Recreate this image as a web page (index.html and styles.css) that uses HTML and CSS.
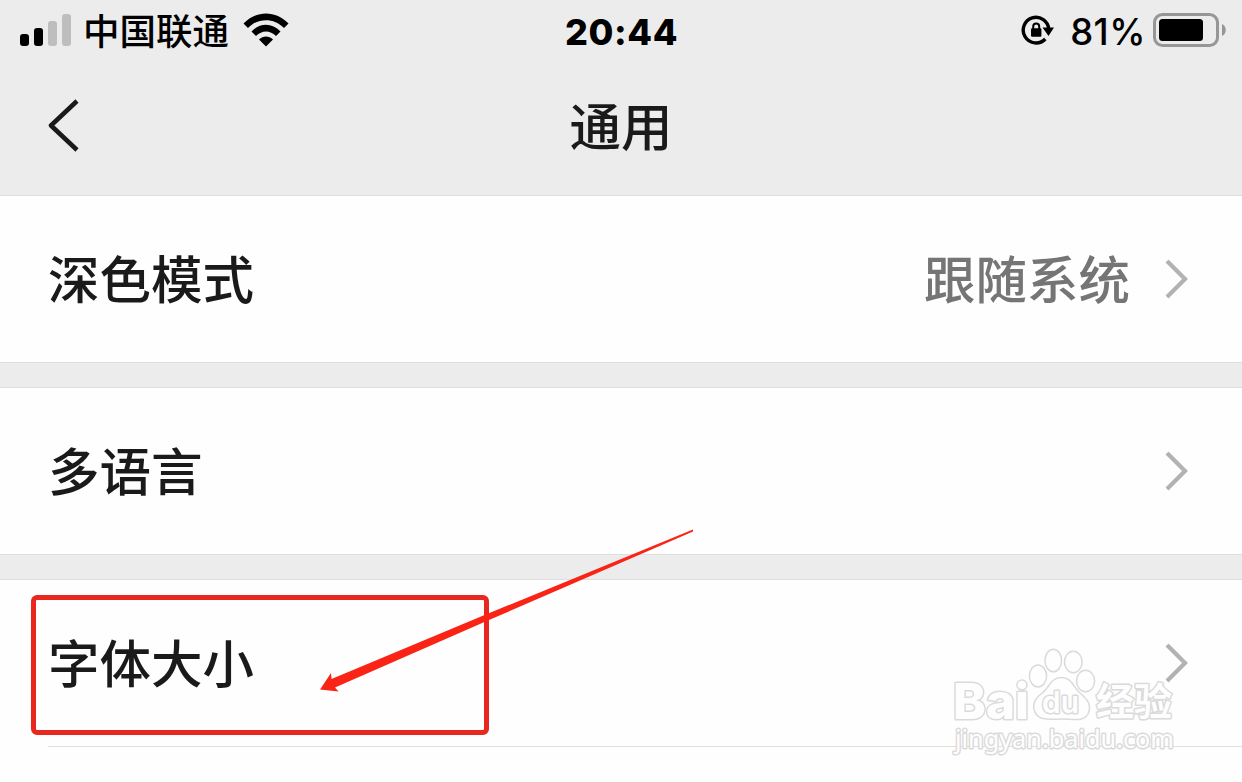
FILE: index.html
```html
<!DOCTYPE html>
<html lang="zh-CN">
  <head>
    <meta charset="UTF-8" />
    <meta name="viewport" content="width=device-width, initial-scale=1.0" />
    <title>通用</title>
    <link rel="stylesheet" href="styles.css">
  </head>
  <body>
    <header>
      <div class="status-bar">
        <div class="status-left">
          <svg class="signal" width="52" height="32" viewBox="0 0 52 32">
            <rect x="0" y="20" width="9" height="12" rx="3" />
            <rect x="14" y="14" width="9" height="18" rx="3" />
            <rect class="off" x="28" y="7" width="9" height="25" rx="3" />
            <rect class="off" x="42" y="0" width="9" height="32" rx="3" />
          </svg>
          <span class="carrier">中国联通</span>
          <svg class="wifi" width="46" height="34" viewBox="0 0 46 34">
            <path d="M0.5 10.5 C13 -3 33 -3 45.5 10.5 L41 15 C31 4.500 15 4.500 5 15 Z" />
            <path d="M8.500 18.500 C17 9.500 29 9.500 37.500 18.500 L33 23 C27 17 19 17 13 23 Z" />
            <path d="M16 26.500 C20 22.500 26 22.500 30 26.500 L23 33.500 Z" />
          </svg>
        </div>
        <span class="time">20:44</span>
        <div class="status-right">
          <svg class="lock" width="34" height="32" viewBox="0 0 34 32">
            <path class="ring" d="M27.800 15.500 A12.800 12.800 0 1 0 24.300 25" />
            <path d="M21.500 13.500 L33 13.500 L27.500 22 Z" />
            <rect x="10" y="14.200" width="10.400" height="8.600" rx="1.200" />
            <path class="shackle" d="M12.200 15 V12.600 A3 3 0 0 1 18.200 12.600 V15" />
          </svg>
          <span class="percent">81%</span>
          <svg class="battery" width="74" height="34" viewBox="0 0 74 34">
            <rect class="shell" x="1.500" y="1.500" width="63" height="31" rx="8" />
            <rect x="6" y="6" width="44" height="22" rx="3.500" />
            <path class="cap" d="M69 11 C74 13 74 21 69 23 Z" />
          </svg>
        </div>
      </div>
      <div class="nav-bar">
        <svg class="back" width="32" height="54" viewBox="0 0 32 54">
          <path d="M29 2 L3 26.500 L29 51" />
        </svg>
        <h1>通用</h1>
      </div>
    </header>

    <main>
      <div class="row">
        <span class="label">深色模式</span>
        <span class="value">跟随系统</span>
        <svg class="arrow" width="24" height="40" viewBox="0 0 24 40"><path d="M2 2 L20 20 L2 38" /></svg>
      </div>
      <div class="row">
        <span class="label">多语言</span>
        <svg class="arrow" width="24" height="40" viewBox="0 0 24 40"><path d="M2 2 L20 20 L2 38" /></svg>
      </div>
      <div class="row row-inset">
        <span class="label">字体大小</span>
        <svg class="arrow" width="24" height="40" viewBox="0 0 24 40"><path d="M2 2 L20 20 L2 38" /></svg>
      </div>
    </main>

    <div class="highlight"></div>
    <svg class="pointer" width="376" height="166" viewBox="0 0 376 166">
      <path d="M374 0.5 L168 85 L12.500 150 L12 144 L1 160.500 L19.500 162.500 L16 158.500 L170 91 L374 2.500 Z" />
    </svg>

    <svg class="watermark" width="240" height="130" viewBox="0 0 240 130">
      <g class="paw">
        <ellipse cx="101.300" cy="20.500" rx="8.300" ry="11.300" />
        <ellipse cx="121.300" cy="22" rx="8.800" ry="10.800" />
        <ellipse cx="86" cy="36" rx="8.600" ry="11" />
        <ellipse cx="133.600" cy="41" rx="9" ry="10.800" />
        <path d="M109.500 37.500 C98 37.500 98 48 89 54 C81 60 80 68 84 74 C89 81 99 79 109.500 79 C121 79 132 82 136 74 C140 65 136 60 128 53 C121 47 120 37.500 109.500 37.500 Z" />
      </g>
      <text class="brand" x="1" y="78.500" textLength="76" lengthAdjust="spacingAndGlyphs">Bai</text>
      <text class="du" x="90" y="73" textLength="37" lengthAdjust="spacingAndGlyphs">du</text>
      <text class="brand-cn" x="144" y="75" textLength="76" lengthAdjust="spacingAndGlyphs">经验</text>
      <text class="site" x="3" y="107.500" textLength="219" lengthAdjust="spacingAndGlyphs">jingyan.baidu.com</text>
    </svg>
  </body>
</html>
```
FILE: styles.css
```css
* {
  box-sizing: border-box;
}

body {
  position: relative;
  margin: 0;
  height: 782px;
  overflow: hidden;
  font-family: Inter, "Noto Sans CJK SC", sans-serif;
  background-color: #fefefe;
  color: #1a1a1a;
}

svg {
  display: block;
  flex: none;
}

header {
  height: 196px;
  background-color: #ececec;
  border-bottom: 1px solid #dedede;
}

/* Status bar */
.status-bar {
  display: grid;
  grid-template-columns: 1fr auto 1fr;
  align-items: center;
  height: 60px;
  padding: 0 15px 0 20px;
  color: #000;
}

.status-left,
.status-right {
  display: flex;
  align-items: center;
}

.status-right {
  justify-content: flex-end;
}

.signal .off {
  fill: #bebebe;
}

.carrier {
  margin: 0 14px 0 11px;
  font-family: "Noto Sans CJK SC", sans-serif;
  font-size: 36.500px;
  font-weight: 500;
  line-height: 60px;
}

.time {
  margin-right: 4px;
  padding-top: 3px;
  font-size: 36px;
  font-weight: 800;
  letter-spacing: 0.600px;
}

.percent {
  margin: 0 7px 0 15px;
  padding-top: 3px;
  font-size: 36.500px;
  font-weight: 550;
  letter-spacing: 0.500px;
}

.lock .ring,
.lock .shackle {
  fill: none;
  stroke: #000;
  stroke-width: 3.400;
}

.lock .shackle {
  stroke-width: 2;
}

.battery .shell {
  fill: none;
  stroke: #969696;
  stroke-width: 3;
}

.battery .cap {
  fill: #969696;
}

/* Title */
.nav-bar {
  display: grid;
  grid-template-columns: 1fr auto 1fr;
  align-items: center;
  height: 132px;
  padding: 0 48px;
}

.back path {
  fill: none;
  stroke: #1a1a1a;
  stroke-width: 4.500;
  stroke-linejoin: round;
}

h1 {
  margin: 0;
  padding-top: 2px;
  font-size: 51.500px;
  font-weight: 500;
  line-height: 80px;
}

/* Setting rows */
main {
  background-color: #ececec;
}

.row {
  position: relative;
  display: flex;
  align-items: center;
  height: 167px;
  padding: 0 53px 0 48px;
  background-color: #fefefe;
  border-bottom: 1px solid #dedede;
  font-size: 51.500px;
  font-weight: 500;
  line-height: 80px;
}

.row + .row {
  height: 168px;
  margin-top: 24px;
  border-top: 1px solid #dedede;
}

.row + .row-inset {
  border-bottom-color: #fefefe;
}

.row-inset::after {
  content: "";
  position: absolute;
  right: 0;
  bottom: -1px;
  left: 48px;
  height: 1px;
  background-color: #e0e0e0;
}

.label,
.value {
  padding-top: 2px;
}

.label {
  margin-right: auto;
}

.value {
  margin-right: 35px;
  color: #757575;
}

.arrow path {
  fill: none;
  stroke: #b2b2b2;
  stroke-width: 4.200;
}

/* Marks over the page */
.highlight {
  position: absolute;
  top: 595px;
  left: 31px;
  width: 458px;
  height: 140px;
  border: 5px solid #e8281e;
  border-radius: 6px;
}

.pointer {
  position: absolute;
  top: 529px;
  left: 319px;
  fill: #f92316;
}

.watermark {
  position: absolute;
  top: 640px;
  left: 952px;
  fill: #fefefe;
  stroke: #dadada;
  stroke-width: 1.500;
}

.watermark text {
  stroke-width: 3;
  stroke-linejoin: round;
  paint-order: stroke;
}

.brand {
  font-family: Inter, sans-serif;
  font-size: 50px;
  font-weight: 800;
}

.du {
  font-family: Inter, sans-serif;
  font-size: 30px;
  font-weight: 600;
}

.brand-cn {
  font-family: "Noto Sans CJK SC", sans-serif;
  font-size: 38px;
  font-weight: 700;
}

.site {
  font-family: "Noto Sans", sans-serif;
  font-size: 26px;
}
```
